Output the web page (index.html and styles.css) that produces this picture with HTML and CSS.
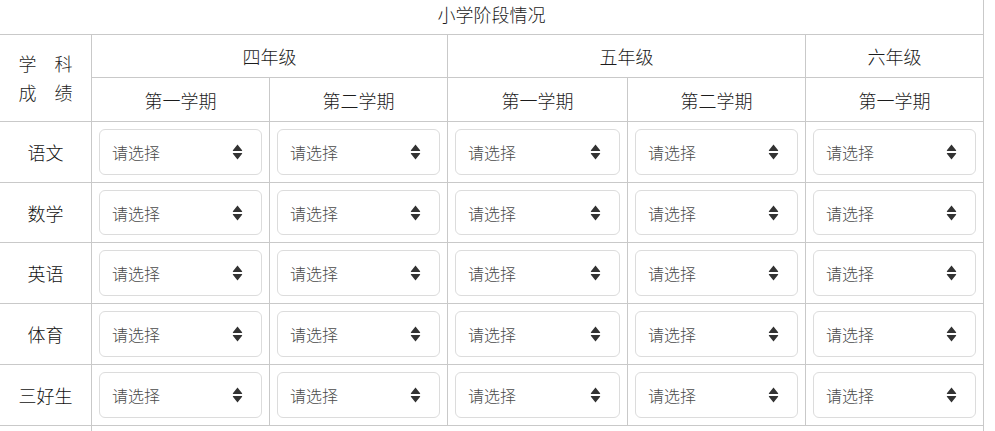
FILE: index.html
```html
<!DOCTYPE html>
<html lang="zh">
<head>
<meta charset="utf-8">
<title>小学阶段情况</title>
<link rel="stylesheet" href="styles.css">
</head>
<body>
<div class="sheet">
  <div class="cell title">小学阶段情况</div>
  <div class="cell corner"><span>学　科</span><span>成　绩</span></div>
  <div class="cell grade span2">四年级</div>
  <div class="cell grade span2">五年级</div>
  <div class="cell grade">六年级</div>
  <div class="cell term">第一学期</div>
  <div class="cell term">第二学期</div>
  <div class="cell term">第一学期</div>
  <div class="cell term">第二学期</div>
  <div class="cell term">第一学期</div>

  <div class="cell subject">语文</div>
  <div class="cell pick"><div class="select"><span>请选择</span><svg viewBox="0 0 10 16" class="sort"><path d="M5 0.5 L9.6 6.3 Q10 7 9.2 7 H0.8 Q0 7 0.4 6.3 Z M0.8 9 H9.2 Q10 9 9.6 9.7 L5 15.5 L0.4 9.7 Q0 9 0.8 9 Z"/></svg></div></div>
  <div class="cell pick"><div class="select"><span>请选择</span><svg viewBox="0 0 10 16" class="sort"><path d="M5 0.5 L9.6 6.3 Q10 7 9.2 7 H0.8 Q0 7 0.4 6.3 Z M0.8 9 H9.2 Q10 9 9.6 9.7 L5 15.5 L0.4 9.7 Q0 9 0.8 9 Z"/></svg></div></div>
  <div class="cell pick"><div class="select"><span>请选择</span><svg viewBox="0 0 10 16" class="sort"><path d="M5 0.5 L9.6 6.3 Q10 7 9.2 7 H0.8 Q0 7 0.4 6.3 Z M0.8 9 H9.2 Q10 9 9.6 9.7 L5 15.5 L0.4 9.7 Q0 9 0.8 9 Z"/></svg></div></div>
  <div class="cell pick"><div class="select"><span>请选择</span><svg viewBox="0 0 10 16" class="sort"><path d="M5 0.5 L9.6 6.3 Q10 7 9.2 7 H0.8 Q0 7 0.4 6.3 Z M0.8 9 H9.2 Q10 9 9.6 9.7 L5 15.5 L0.4 9.7 Q0 9 0.8 9 Z"/></svg></div></div>
  <div class="cell pick"><div class="select"><span>请选择</span><svg viewBox="0 0 10 16" class="sort"><path d="M5 0.5 L9.6 6.3 Q10 7 9.2 7 H0.8 Q0 7 0.4 6.3 Z M0.8 9 H9.2 Q10 9 9.6 9.7 L5 15.5 L0.4 9.7 Q0 9 0.8 9 Z"/></svg></div></div>

  <div class="cell subject">数学</div>
  <div class="cell pick"><div class="select"><span>请选择</span><svg viewBox="0 0 10 16" class="sort"><path d="M5 0.5 L9.6 6.3 Q10 7 9.2 7 H0.8 Q0 7 0.4 6.3 Z M0.8 9 H9.2 Q10 9 9.6 9.7 L5 15.5 L0.4 9.7 Q0 9 0.8 9 Z"/></svg></div></div>
  <div class="cell pick"><div class="select"><span>请选择</span><svg viewBox="0 0 10 16" class="sort"><path d="M5 0.5 L9.6 6.3 Q10 7 9.2 7 H0.8 Q0 7 0.4 6.3 Z M0.8 9 H9.2 Q10 9 9.6 9.7 L5 15.5 L0.4 9.7 Q0 9 0.8 9 Z"/></svg></div></div>
  <div class="cell pick"><div class="select"><span>请选择</span><svg viewBox="0 0 10 16" class="sort"><path d="M5 0.5 L9.6 6.3 Q10 7 9.2 7 H0.8 Q0 7 0.4 6.3 Z M0.8 9 H9.2 Q10 9 9.6 9.7 L5 15.5 L0.4 9.7 Q0 9 0.8 9 Z"/></svg></div></div>
  <div class="cell pick"><div class="select"><span>请选择</span><svg viewBox="0 0 10 16" class="sort"><path d="M5 0.5 L9.6 6.3 Q10 7 9.2 7 H0.8 Q0 7 0.4 6.3 Z M0.8 9 H9.2 Q10 9 9.6 9.7 L5 15.5 L0.4 9.7 Q0 9 0.8 9 Z"/></svg></div></div>
  <div class="cell pick"><div class="select"><span>请选择</span><svg viewBox="0 0 10 16" class="sort"><path d="M5 0.5 L9.6 6.3 Q10 7 9.2 7 H0.8 Q0 7 0.4 6.3 Z M0.8 9 H9.2 Q10 9 9.6 9.7 L5 15.5 L0.4 9.7 Q0 9 0.8 9 Z"/></svg></div></div>

  <div class="cell subject">英语</div>
  <div class="cell pick"><div class="select"><span>请选择</span><svg viewBox="0 0 10 16" class="sort"><path d="M5 0.5 L9.6 6.3 Q10 7 9.2 7 H0.8 Q0 7 0.4 6.3 Z M0.8 9 H9.2 Q10 9 9.6 9.7 L5 15.5 L0.4 9.7 Q0 9 0.8 9 Z"/></svg></div></div>
  <div class="cell pick"><div class="select"><span>请选择</span><svg viewBox="0 0 10 16" class="sort"><path d="M5 0.5 L9.6 6.3 Q10 7 9.2 7 H0.8 Q0 7 0.4 6.3 Z M0.8 9 H9.2 Q10 9 9.6 9.7 L5 15.5 L0.4 9.7 Q0 9 0.8 9 Z"/></svg></div></div>
  <div class="cell pick"><div class="select"><span>请选择</span><svg viewBox="0 0 10 16" class="sort"><path d="M5 0.5 L9.6 6.3 Q10 7 9.2 7 H0.8 Q0 7 0.4 6.3 Z M0.8 9 H9.2 Q10 9 9.6 9.7 L5 15.5 L0.4 9.7 Q0 9 0.8 9 Z"/></svg></div></div>
  <div class="cell pick"><div class="select"><span>请选择</span><svg viewBox="0 0 10 16" class="sort"><path d="M5 0.5 L9.6 6.3 Q10 7 9.2 7 H0.8 Q0 7 0.4 6.3 Z M0.8 9 H9.2 Q10 9 9.6 9.7 L5 15.5 L0.4 9.7 Q0 9 0.8 9 Z"/></svg></div></div>
  <div class="cell pick"><div class="select"><span>请选择</span><svg viewBox="0 0 10 16" class="sort"><path d="M5 0.5 L9.6 6.3 Q10 7 9.2 7 H0.8 Q0 7 0.4 6.3 Z M0.8 9 H9.2 Q10 9 9.6 9.7 L5 15.5 L0.4 9.7 Q0 9 0.8 9 Z"/></svg></div></div>

  <div class="cell subject">体育</div>
  <div class="cell pick"><div class="select"><span>请选择</span><svg viewBox="0 0 10 16" class="sort"><path d="M5 0.5 L9.6 6.3 Q10 7 9.2 7 H0.8 Q0 7 0.4 6.3 Z M0.8 9 H9.2 Q10 9 9.6 9.7 L5 15.5 L0.4 9.7 Q0 9 0.8 9 Z"/></svg></div></div>
  <div class="cell pick"><div class="select"><span>请选择</span><svg viewBox="0 0 10 16" class="sort"><path d="M5 0.5 L9.6 6.3 Q10 7 9.2 7 H0.8 Q0 7 0.4 6.3 Z M0.8 9 H9.2 Q10 9 9.6 9.7 L5 15.5 L0.4 9.7 Q0 9 0.8 9 Z"/></svg></div></div>
  <div class="cell pick"><div class="select"><span>请选择</span><svg viewBox="0 0 10 16" class="sort"><path d="M5 0.5 L9.6 6.3 Q10 7 9.2 7 H0.8 Q0 7 0.4 6.3 Z M0.8 9 H9.2 Q10 9 9.6 9.7 L5 15.5 L0.4 9.7 Q0 9 0.8 9 Z"/></svg></div></div>
  <div class="cell pick"><div class="select"><span>请选择</span><svg viewBox="0 0 10 16" class="sort"><path d="M5 0.5 L9.6 6.3 Q10 7 9.2 7 H0.8 Q0 7 0.4 6.3 Z M0.8 9 H9.2 Q10 9 9.6 9.7 L5 15.5 L0.4 9.7 Q0 9 0.8 9 Z"/></svg></div></div>
  <div class="cell pick"><div class="select"><span>请选择</span><svg viewBox="0 0 10 16" class="sort"><path d="M5 0.5 L9.6 6.3 Q10 7 9.2 7 H0.8 Q0 7 0.4 6.3 Z M0.8 9 H9.2 Q10 9 9.6 9.7 L5 15.5 L0.4 9.7 Q0 9 0.8 9 Z"/></svg></div></div>

  <div class="cell subject">三好生</div>
  <div class="cell pick"><div class="select"><span>请选择</span><svg viewBox="0 0 10 16" class="sort"><path d="M5 0.5 L9.6 6.3 Q10 7 9.2 7 H0.8 Q0 7 0.4 6.3 Z M0.8 9 H9.2 Q10 9 9.6 9.7 L5 15.5 L0.4 9.7 Q0 9 0.8 9 Z"/></svg></div></div>
  <div class="cell pick"><div class="select"><span>请选择</span><svg viewBox="0 0 10 16" class="sort"><path d="M5 0.5 L9.6 6.3 Q10 7 9.2 7 H0.8 Q0 7 0.4 6.3 Z M0.8 9 H9.2 Q10 9 9.6 9.7 L5 15.5 L0.4 9.7 Q0 9 0.8 9 Z"/></svg></div></div>
  <div class="cell pick"><div class="select"><span>请选择</span><svg viewBox="0 0 10 16" class="sort"><path d="M5 0.5 L9.6 6.3 Q10 7 9.2 7 H0.8 Q0 7 0.4 6.3 Z M0.8 9 H9.2 Q10 9 9.6 9.7 L5 15.5 L0.4 9.7 Q0 9 0.8 9 Z"/></svg></div></div>
  <div class="cell pick"><div class="select"><span>请选择</span><svg viewBox="0 0 10 16" class="sort"><path d="M5 0.5 L9.6 6.3 Q10 7 9.2 7 H0.8 Q0 7 0.4 6.3 Z M0.8 9 H9.2 Q10 9 9.6 9.7 L5 15.5 L0.4 9.7 Q0 9 0.8 9 Z"/></svg></div></div>
  <div class="cell pick"><div class="select"><span>请选择</span><svg viewBox="0 0 10 16" class="sort"><path d="M5 0.5 L9.6 6.3 Q10 7 9.2 7 H0.8 Q0 7 0.4 6.3 Z M0.8 9 H9.2 Q10 9 9.6 9.7 L5 15.5 L0.4 9.7 Q0 9 0.8 9 Z"/></svg></div></div>

  <div class="cell subject"></div>
  <div class="cell span5"></div>
</div>
</body>
</html>
```

FILE: styles.css
```css
html, body {
  margin: 0;
  padding: 0;
  background: #fff;
}

body {
  font-family: "Noto Sans CJK SC", "Noto Sans", sans-serif;
  font-weight: 300;
  color: #1c1c1c;
}

.sheet {
  display: grid;
  width: 983px;
  grid-template-columns: 91px 177px 177px 179px 177px 177px;
  grid-template-rows: 34px 42px 43px 60px 59px 60px 60px 60px 60px;
  gap: 1px;
  padding-right: 1px;
  background: #c9c9c9;
}

.cell {
  background: #fff;
  display: flex;
  align-items: center;
  justify-content: center;
  font-size: 18px;
  line-height: 1;
}

.title {
  grid-column: 1 / -1;
  padding-bottom: 6px;
  box-sizing: border-box;
}

.corner {
  grid-row: 2 / 4;
  flex-direction: column;
  line-height: 29px;
}

.span2 {
  grid-column: span 2;
}

.span5 {
  grid-column: span 5;
}

.subject {
  color: #111;
}

.pick {
  padding: 7px;
  align-items: stretch;
}

.select {
  flex: 1;
  border: 1px solid #dcdcdc;
  border-radius: 6px;
  display: flex;
  align-items: center;
  justify-content: space-between;
  padding: 0 18px 0 12px;
  font-size: 16px;
  color: #4a4a4a;
}

.sort {
  width: 11px;
  height: 16px;
  fill: #333;
}
```
